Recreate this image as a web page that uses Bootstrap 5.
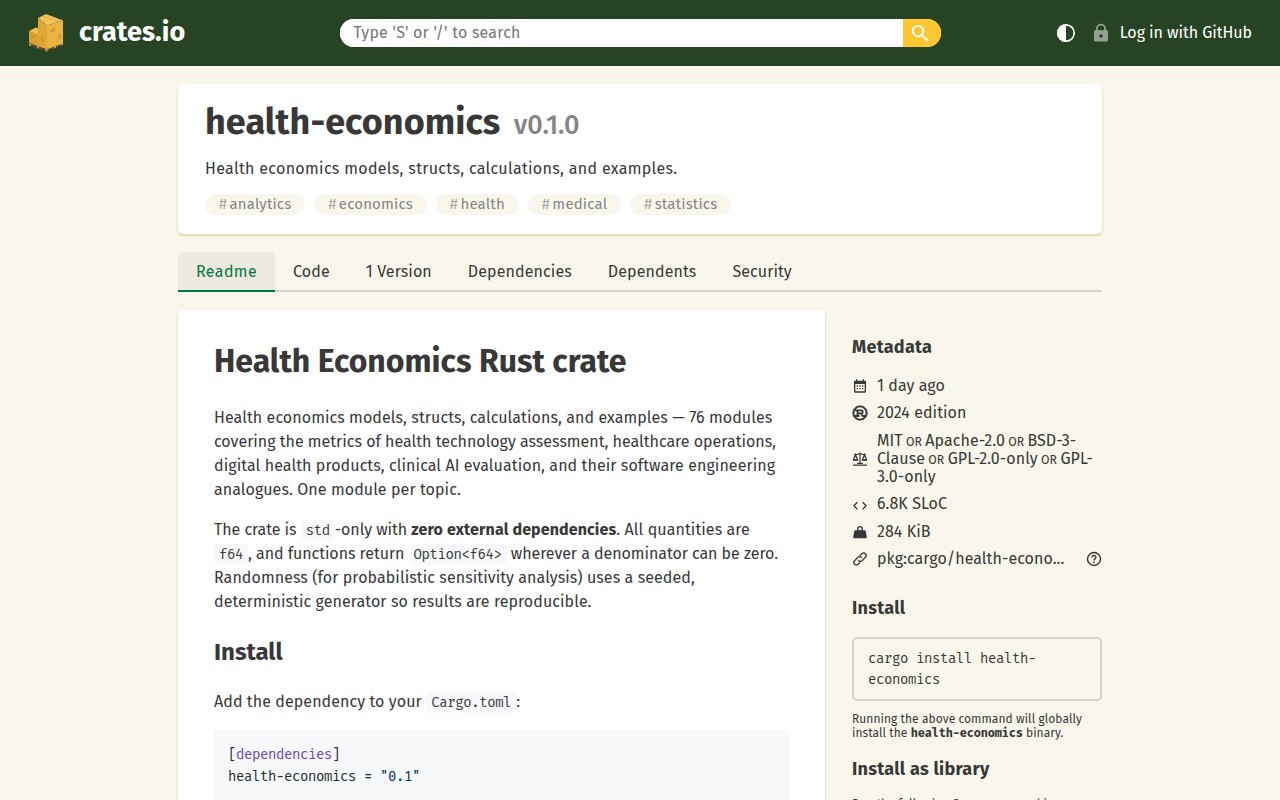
<!DOCTYPE html>
<html lang="en">
<head>
<meta charset="utf-8">
<meta name="viewport" content="width=device-width, initial-scale=1">
<title>health-economics - crates.io: Rust Package Registry</title>
<link href="https://cdn.jsdelivr.net/npm/bootstrap@5.3.0/dist/css/bootstrap.min.css" rel="stylesheet">
<style>
:root{--ink:#383838;--mono:"Fira Mono","DejaVu Sans Mono",monospace}
body{background:#f9f7ec;color:var(--ink);font-family:"Fira Sans","Noto Sans",sans-serif;font-size:16px;line-height:1.15}
h1,h2,h3,p{margin:0}
a{color:inherit;text-decoration:none}
svg{display:block;flex:none}
.site-header{height:66px;background:#264323;color:#fff}
.brand-name{font-size:27px;font-weight:700;line-height:32px;margin:-2px 0 0 9px;letter-spacing:.1px}
.search-box{width:601px;height:28px;border-radius:14px;overflow:hidden;background:#fff}
.search-box input{border:0;outline:0;padding:0 14px;font-size:16px;line-height:28px;letter-spacing:.2px;background:#fff}
.search-box input::placeholder{color:#757575;opacity:1}
.search-btn{width:38px;border:0;background:#ffc832;color:#fff;padding:0 0 0 6px}
.login{margin-left:10px;letter-spacing:-.05px}
.theme-icon{margin-right:16px}
.page-width{width:924px;padding-top:18px}
.panel{background:#fff;border-radius:5px;box-shadow:0 2px 3px #e3dcb8,0 1px 2px #dfd8b0}
.crate-head{height:150px;padding:18px 27px}
.crate-head h1{font-size:36px;font-weight:700;line-height:40px;letter-spacing:.07px}
.crate-head small{font-size:27px;font-weight:500;color:#858585;margin-left:5px;letter-spacing:-.2px}
.desc{margin-top:15px;letter-spacing:.32px}
.keywords{margin-top:16px;gap:9px}
.keyword{height:21px;line-height:21px;border-radius:11px;padding:0 14px;background:#f9f7ec;color:#858585;font-size:15px;letter-spacing:.17px}
.keyword span{opacity:.7;margin-right:2.5px}
.tabs{border-bottom:2px solid #d5d3c7;height:40px;margin:18px 0;letter-spacing:.11px}
.tabs a{height:40px;padding:0 18px;line-height:40px;border-radius:5px 5px 0 0}
.tabs a.on{background:#edebdf;color:#007940;border-bottom:2px solid #007940;letter-spacing:.4px}
.readme{width:647px;padding:27px 36px 60px;line-height:24px;letter-spacing:.08px}
.readme h1{font-size:32px;font-weight:700;line-height:48px;margin-bottom:21px;letter-spacing:0}
.readme h2{font-size:24px;font-weight:700;line-height:36px;margin:20px 0;letter-spacing:0}
.readme p{margin-bottom:16px;white-space:nowrap}
.readme strong{font-weight:700;letter-spacing:.12px}
.snug{letter-spacing:0}
.snug-more{letter-spacing:-.05px}
.readme p code{font:14px/20px var(--mono);letter-spacing:-.4px;color:inherit;background:#f6f8fa;border-radius:5px;padding:2px 5px}
.readme pre{font:14px/22px var(--mono);letter-spacing:-.4px;background:#f6f8fa;border-radius:5px;padding:14px;height:110px;margin:0;color:#24292e}
.readme pre code{font:inherit;color:inherit}
.tok-section{color:#6f42c1}
.tok-string{color:#032f62}
.side{width:250px;padding-top:26px}
.side h2{font-size:18px;font-weight:700;line-height:22px;letter-spacing:.28px}
.meta-list{gap:9px;line-height:18.3px;margin:19px 0 29px;letter-spacing:.06px}
.meta-list li{gap:9px}
.meta-list small{font-size:12.3px;line-height:1}
.install-cmd{border:2px solid #d5d3c7;border-radius:5px;padding:9px 14px;margin:18px 0 11px;font:14px/21px var(--mono);letter-spacing:-.4px}
.note{font-size:12px;line-height:14px;letter-spacing:.06px}
.note strong{font:700 12px/14px var(--mono);letter-spacing:-.2px}
.side .lib-title{margin:18px 0 17px}
</style>
</head>
<body>
<div class="vh-100 overflow-hidden">
<header class="site-header d-flex align-items-center justify-content-between position-relative">
  <a href="#" class="d-flex align-items-center">
    <svg class="ms-4" width="46" height="46" viewBox="0 0 46 46">
      <path d="M5 33l17.500 5L39 33v2.500L22.500 41.500 5 35.500z" fill="#5d4630"/>
      <path d="M5 33.500v2l2 .7v-2zM13 36v2l2 .7v-2zM21.500 38.500v3l2-.3v-3zM30 36.500v2l2-.7v-2zM37.300 33.500v2l1.700-.6v-2z" fill="#b09a80"/>
      <path d="M5 21l7-3.500 4 1.500v5l-3 1z" fill="#efbf4e"/><path d="M5 21l9 3.500v11.700L5 33z" fill="#dca22f"/>
      <path d="M14 8l8-4 17 6.500-16 5z" fill="#f0c25a"/><path d="M14 8l9 7.500v23.700l-9-3z" fill="#dfa836"/><path d="M23 15.500l16-5v23l-16 5.700z" fill="#e9b440"/>
      <path d="M18 6l17 6" fill="none" stroke="#d9a337" stroke-width=".7"/>
      <path d="M26 19l5-1.500v4L26 23zM34 25l3-1v4l-3 1zM17 28l3 1.200v4L17 32zM7 25l3 1v3l-3-1z" fill="#c48a22" opacity=".5"/>
    </svg>
    <span class="brand-name">crates.io</span>
  </a>
  <form class="search-box d-flex position-absolute start-0 end-0 mx-auto">
    <input class="flex-grow-1" type="text" placeholder="Type 'S' or '/' to search" aria-label="Search">
    <button class="search-btn" type="button" aria-label="Submit"><svg width="23" height="23" viewBox="0 0 24 24" fill="currentColor"><path d="M15.500 14h-.79l-.28-.27A6.470 6.470 0 0 0 16 9.500 6.500 6.500 0 1 0 9.500 16c1.610 0 3.090-.59 4.230-1.570l.27.28v.79l5 4.990L20.490 19l-4.990-5zm-6 0C7.010 14 5 11.990 5 9.500S7.010 5 9.500 5 14 7.010 14 9.500 11.990 14 9.500 14z"/></svg></button>
  </form>
  <nav class="d-flex align-items-center me-4 pe-1">
    <svg class="theme-icon" width="20" height="20" viewBox="0 0 20 20"><circle cx="10" cy="10" r="8.200" fill="none" stroke="#fff" stroke-width="1.700"/><path d="M10 1a9 9 0 0 0 0 18z" fill="#fff"/></svg>
    <svg width="18" height="20" viewBox="0 0 18 20" opacity=".5" fill="#fff"><path fill-rule="evenodd" d="M3.400 7.300H4V5.800a5 5 0 0 1 10 0v1.500h.6c.8 0 1.400.6 1.400 1.400v8.400c0 .8-.6 1.400-1.400 1.400H3.400c-.8 0-1.400-.6-1.400-1.400V8.700c0-.8.6-1.400 1.400-1.400zM5.800 7.300h6.400V5.800a3.200 3.200 0 0 0-6.400 0zM9 11.200a1.800 1.800 0 1 0 0 3.600 1.800 1.800 0 0 0 0-3.600z"/></svg>
    <a href="#" class="login">Log in with GitHub</a>
  </nav>
</header>
<main class="page-width mx-auto">
  <section class="panel crate-head">
    <h1>health-economics <small>v0.1.0</small></h1>
    <p class="desc">Health economics models, structs, calculations, and examples.</p>
    <div class="keywords d-flex">
      <a class="keyword" href="#"><span>#</span>analytics</a><a class="keyword" href="#"><span>#</span>economics</a><a class="keyword" href="#"><span>#</span>health</a><a class="keyword" href="#"><span>#</span>medical</a><a class="keyword" href="#"><span>#</span>statistics</a>
    </div>
  </section>
  <nav class="tabs d-flex">
    <a class="on" href="#">Readme</a><a href="#">Code</a><a href="#">1 Version</a><a href="#">Dependencies</a><a href="#">Dependents</a><a href="#">Security</a>
  </nav>
  <div class="d-flex justify-content-between align-items-start">
    <article class="panel readme">
      <h1>Health Economics Rust crate</h1>
      <p>Health economics models, structs, calculations, and examples — 76 modules<br><span class="snug">covering the metrics of health technology assessment, healthcare operations,</span><br>digital health products, clinical AI evaluation, and their software engineering<br>analogues. One module per topic.</p>
      <p><span class="snug-more">The crate is <code>std</code>-only with </span><strong>zero external dependencies</strong>. All quantities are<br><span class="snug-more"><code>f64</code>, and functions return <code>Option&lt;f64&gt;</code> wherever a denominator can be zero.</span><br>Randomness (for probabilistic sensitivity analysis) uses a seeded,<br>deterministic generator so results are reproducible.</p>
      <h2>Install</h2>
      <p>Add the dependency to your <code>Cargo.toml</code>:</p>
      <pre><code>[<span class="tok-section">dependencies</span>]
health-economics = <span class="tok-string">"0.1"</span></code></pre>
    </article>
    <aside class="side">
      <h2>Metadata</h2>
      <ul class="meta-list list-unstyled d-flex flex-column">
        <li class="d-flex align-items-center"><svg width="16" height="16" viewBox="0 0 24 24" fill="currentColor"><path d="M19 4h-1V2h-2v2H8V2H6v2H5a2 2 0 0 0-2 2v14a2 2 0 0 0 2 2h14a2 2 0 0 0 2-2V6a2 2 0 0 0-2-2zm0 16H5V9h14zM7 11h2v2H7zm4 0h2v2h-2zm4 0h2v2h-2zM7 15h2v2H7zm4 0h2v2h-2zm4 0h2v2h-2z"/></svg><span>1 day ago</span></li>
        <li class="d-flex align-items-center"><svg width="16" height="16" viewBox="0 0 16 16" fill="none" stroke="currentColor"><circle cx="8" cy="8" r="6.500" stroke-width="1.700"/><circle cx="8" cy="8" r="7.400" stroke-width="1" stroke-dasharray=".75 .7"/><path d="M3 5.400h6.300a1.500 1.500 0 0 1 0 3H5.500M3 11h4.500M5.500 5.400V11M8.300 8.400c2 0 1.200 2.600 2.700 2.600h2" stroke-width="1.800"/></svg><span>2024 edition</span></li>
        <li class="d-flex align-items-center"><svg width="16" height="16" viewBox="0 0 16 16" fill="none" stroke="currentColor" stroke-width="1.200"><path d="M8 1.500v11M2 3.500h3L8 2.700l3 .8h3M1 14.200h14M5 12.400h6M3.500 3.500L1.300 9h4.400zM12.500 3.500L10.300 9h4.400z"/><path d="M1 8.600c.5 2 4.500 2 5 0zM10 8.600c.5 2 4.500 2 5 0z" fill="currentColor" stroke="none"/></svg><span>MIT<small> OR </small>Apache-2.0<small> OR </small>BSD-3-<br>Clause<small> OR </small>GPL-2.0-only<small> OR </small>GPL-<br>3.0-only</span></li>
        <li class="d-flex align-items-center"><svg width="16" height="16" viewBox="0 0 16 16" fill="none" stroke="currentColor" stroke-width="1.300"><path d="M5.300 5.200L2 8.700l3.300 3.500M10.700 5.200L14 8.700l-3.300 3.500"/></svg><span>6.8K SLoC</span></li>
        <li class="d-flex align-items-center"><svg width="16" height="16" viewBox="0 0 16 16"><path d="M3.500 6.200h9c.6 0 1 .3 1.200.9l1.100 6c.1.700-.3 1.200-1 1.200H2.200c-.700 0-1.100-.5-1-1.200l1.100-6c.2-.6.6-.9 1.200-.9z" fill="currentColor"/><circle cx="8" cy="4.900" r="2.300" fill="none" stroke="currentColor" stroke-width="1.400"/></svg><span>284 KiB</span></li>
        <li class="d-flex align-items-center"><svg width="16" height="16" viewBox="0 0 16 16" fill="none" stroke="currentColor" stroke-width="1.250" stroke-linecap="round"><path d="M8.200 4.300l1.700-1.500a2.500 2.500 0 0 1 3.600 3.500L10.300 9.500a2.500 2.500 0 0 1-3.700 0M7.800 11.700l-1.700 1.500a2.500 2.500 0 0 1-3.600-3.500L5.700 6.500a2.500 2.500 0 0 1 3.700 0"/></svg><span>pkg:cargo/health-econo...</span><svg class="ms-auto" width="16" height="16" viewBox="0 0 16 16" fill="none" stroke="currentColor" stroke-width="1.400"><circle cx="8" cy="8" r="6.500"/><path d="M6.100 6.300a1.900 1.900 0 1 1 2.900 1.600C8.300 8.300 8 8.600 8 9.400"/><circle cx="8" cy="11.300" r=".9" fill="currentColor" stroke="none"/></svg></li>
      </ul>
      <h2>Install</h2>
      <div class="install-cmd">cargo install health-<br>economics</div>
      <p class="note">Running the above command will globally<br>install the <strong>health-economics</strong> binary.</p>
      <h2 class="lib-title">Install as library</h2>
      <p class="note">Run the following Cargo command in your<br>project directory:</p>
    </aside>
  </div>
</main>
</div>
</body>
</html>
